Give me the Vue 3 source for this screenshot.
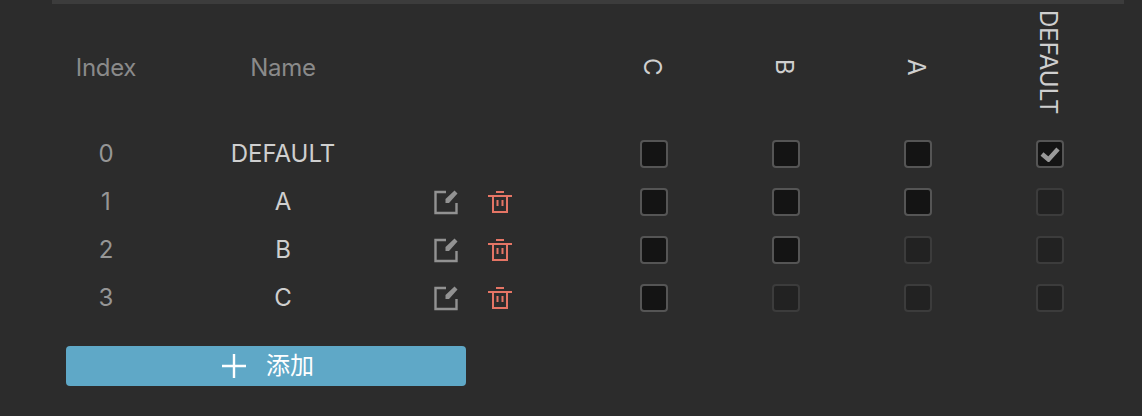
<template>
  <div class="panel">
    <div class="top-bar"></div>
    <div class="matrix">
      <div class="head index">Index</div>
      <div class="head name">Name</div>
      <div></div>
      <div v-for="c in columns" :key="c.index" class="head-group">
        <span :class="{ long: c.name.length > 1 }">{{ c.name }}</span>
      </div>

      <template v-for="g in groups" :key="g.index">
        <div class="cell index num">{{ g.index }}</div>
        <div class="cell name label">{{ g.name }}</div>
        <div class="cell actions">
          <template v-if="g.index > 0">
            <svg class="icon" width="24" height="26" viewBox="0 0 24 26">
              <path d="M12 3H1.500V24H22.500V14" fill="none" stroke="#929292" stroke-width="2.400" />
              <path d="M11.500 14V10L20.500 1.500 23.500 4.500 15 14z" fill="#929292" />
            </svg>
            <svg class="icon trash" width="24" height="24" viewBox="0 0 24 24">
              <path d="M8 2h8M0 6h24M5 6v16h14V6M9.500 10v6M14.500 10v6" fill="none" stroke="#e57565" stroke-width="2" />
            </svg>
          </template>
        </div>
        <div v-for="c in columns" :key="c.index" class="cell check">
          <div class="box" :class="{ off: c.index < g.index }">
            <svg v-if="g.index === 0 && c.index === 0" width="20" height="16" viewBox="0 0 20 16">
              <path d="M2 8l6.500 5.500L18 3" fill="none" stroke="#999" stroke-width="4.500" />
            </svg>
          </div>
        </div>
      </template>
    </div>
    <button class="add">
      <svg width="24" height="24" viewBox="0 0 24 24">
        <path d="M0 12h24M12 0v24" stroke="#fff" stroke-width="2.400" />
      </svg>
      <span>添加</span>
    </button>
  </div>
</template>

<script setup>
const groups = [
  { index: 0, name: 'DEFAULT' },
  { index: 1, name: 'A' },
  { index: 2, name: 'B' },
  { index: 3, name: 'C' }
]

// the columns run the other way round from the rows
const columns = [...groups].reverse()
</script>

<style>
html,
body {
  background: #2c2c2c;
}
</style>

<style scoped>
.panel {
  width: 1142px;
  height: 416px;
  background: #2c2c2c;
  font-family: "Inter", "Noto Sans CJK SC", sans-serif;
  font-size: 24px;
  overflow: hidden;
}

.top-bar {
  height: 4px;
  margin: 0 18px 0 52px;
  background: #3c3c3c;
}

.matrix {
  display: grid;
  grid-template-columns: 80px 274px 168px repeat(4, 132px);
  grid-template-rows: 126px repeat(4, 48px);
  padding-left: 66px;
}

.head,
.cell {
  display: flex;
  align-items: center;
  justify-content: center;
}

.head {
  color: #8a8a8a;
  height: 126px;
  letter-spacing: -0.3px;
}

.head-group {
  display: flex;
  justify-content: center;
  align-items: center;
  color: #cfcfcf;
  padding-right: 3px;
}

.head-group span {
  writing-mode: vertical-rl;
}

.head-group .long {
  padding-bottom: 9px;
}

.num,
.label {
  padding-bottom: 1px;
}

.num {
  color: #969696;
}

.label {
  color: #cfcfcf;
}

.actions {
  justify-content: flex-start;
  padding-left: 14px;
  gap: 30px;
}

.icon {
  display: block;
  flex: none;
}

.box {
  box-sizing: border-box;
  width: 28px;
  height: 28px;
  border: 2px solid #555;
  border-radius: 4px;
  background: #141414;
  display: flex;
  align-items: center;
  justify-content: center;
}

.box.off {
  border-color: #3c3c3c;
  background: #222;
}

.add {
  display: flex;
  align-items: center;
  justify-content: center;
  gap: 20px;
  width: 400px;
  height: 40px;
  margin: 24px 0 0 66px;
  padding: 0 0 0 4px;
  border: none;
  border-radius: 4px;
  background: #5fa8c7;
  color: #fff;
  font-family: inherit;
  font-size: 24px;
}

.add span {
  line-height: 1;
}
</style>
